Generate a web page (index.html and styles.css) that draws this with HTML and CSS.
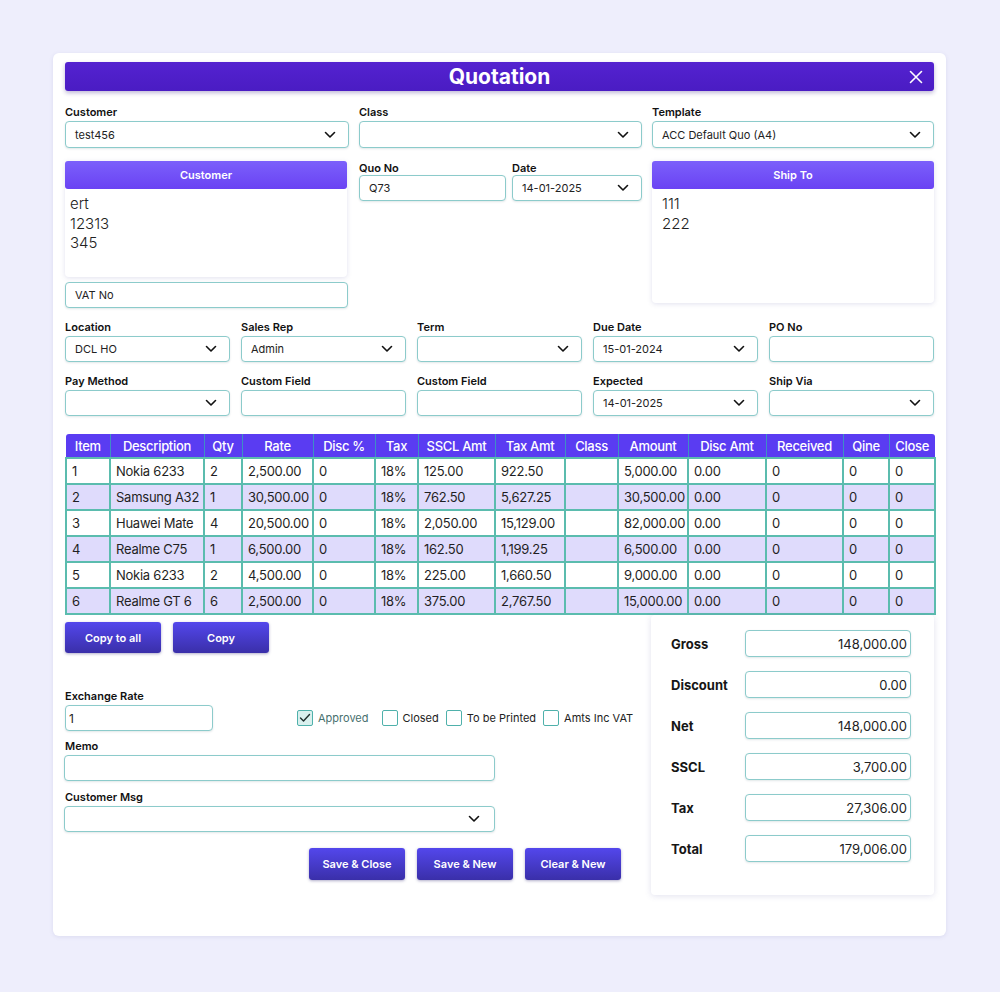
FILE: index.html
```html
<!DOCTYPE html>
<html lang="en">
<head>
<meta charset="utf-8">
<title>Quotation</title>
<link rel="stylesheet" href="styles.css">
</head>
<body>
<div class="card">
  <div class="titlebar">
    <span></span>
    <h1 class="title">Quotation</h1>
    <svg class="close" width="14" height="14" viewBox="0 0 14 14"><path d="M1.5 1.5 L12.5 12.5 M12.5 1.5 L1.5 12.5" stroke="#fff" stroke-width="1.6" fill="none" stroke-linecap="round"/></svg>
  </div>

  <div class="grid3 sec1">
    <div class="field">
      <div class="label">Customer</div>
      <div class="input select"><span>test456</span><svg class="chev" width="12" height="8" viewBox="0 0 12 8"><path d="M1.5 1.5 L6 6 L10.5 1.5" stroke="#111" stroke-width="1.6" fill="none" stroke-linecap="round" stroke-linejoin="round"/></svg></div>
    </div>
    <div class="field">
      <div class="label">Class</div>
      <div class="input select"><span></span><svg class="chev" width="12" height="8" viewBox="0 0 12 8"><path d="M1.5 1.5 L6 6 L10.5 1.5" stroke="#111" stroke-width="1.6" fill="none" stroke-linecap="round" stroke-linejoin="round"/></svg></div>
    </div>
    <div class="field">
      <div class="label">Template</div>
      <div class="input select"><span>ACC Default Quo (A4)</span><svg class="chev" width="12" height="8" viewBox="0 0 12 8"><path d="M1.5 1.5 L6 6 L10.5 1.5" stroke="#111" stroke-width="1.6" fill="none" stroke-linecap="round" stroke-linejoin="round"/></svg></div>
    </div>
  </div>

  <div class="grid3 sec2">
    <div class="col">
      <div class="addr addr-cust">
        <div class="addr-head">Customer</div>
        <div class="addr-body">ert<br>12313<br>345</div>
      </div>
      <div class="input vat"><span>VAT No</span></div>
    </div>
    <div class="quo">
      <div class="field quo-no">
        <div class="label tight">Quo No</div>
        <div class="input"><span>Q73</span></div>
      </div>
      <div class="field quo-date">
        <div class="label tight">Date</div>
        <div class="input select"><span>14-01-2025</span><svg class="chev" width="12" height="8" viewBox="0 0 12 8"><path d="M1.5 1.5 L6 6 L10.5 1.5" stroke="#111" stroke-width="1.6" fill="none" stroke-linecap="round" stroke-linejoin="round"/></svg></div>
      </div>
    </div>
    <div class="col">
      <div class="addr addr-ship">
        <div class="addr-head">Ship To</div>
        <div class="addr-body">111<br>222</div>
      </div>
    </div>
  </div>

  <div class="grid5 sec3">
    <div class="field"><div class="label">Location</div><div class="input select"><span>DCL HO</span><svg class="chev" width="12" height="8" viewBox="0 0 12 8"><path d="M1.5 1.5 L6 6 L10.5 1.5" stroke="#111" stroke-width="1.6" fill="none" stroke-linecap="round" stroke-linejoin="round"/></svg></div></div>
    <div class="field"><div class="label">Sales Rep</div><div class="input select"><span>Admin</span><svg class="chev" width="12" height="8" viewBox="0 0 12 8"><path d="M1.5 1.5 L6 6 L10.5 1.5" stroke="#111" stroke-width="1.6" fill="none" stroke-linecap="round" stroke-linejoin="round"/></svg></div></div>
    <div class="field"><div class="label">Term</div><div class="input select"><span></span><svg class="chev" width="12" height="8" viewBox="0 0 12 8"><path d="M1.5 1.5 L6 6 L10.5 1.5" stroke="#111" stroke-width="1.6" fill="none" stroke-linecap="round" stroke-linejoin="round"/></svg></div></div>
    <div class="field"><div class="label">Due Date</div><div class="input select"><span>15-01-2024</span><svg class="chev" width="12" height="8" viewBox="0 0 12 8"><path d="M1.5 1.5 L6 6 L10.5 1.5" stroke="#111" stroke-width="1.6" fill="none" stroke-linecap="round" stroke-linejoin="round"/></svg></div></div>
    <div class="field"><div class="label">PO No</div><div class="input"><span></span></div></div>
  </div>

  <div class="grid5 sec4">
    <div class="field"><div class="label">Pay Method</div><div class="input select"><span></span><svg class="chev" width="12" height="8" viewBox="0 0 12 8"><path d="M1.5 1.5 L6 6 L10.5 1.5" stroke="#111" stroke-width="1.6" fill="none" stroke-linecap="round" stroke-linejoin="round"/></svg></div></div>
    <div class="field"><div class="label">Custom Field</div><div class="input"><span></span></div></div>
    <div class="field"><div class="label">Custom Field</div><div class="input"><span></span></div></div>
    <div class="field"><div class="label">Expected</div><div class="input select"><span>14-01-2025</span><svg class="chev" width="12" height="8" viewBox="0 0 12 8"><path d="M1.5 1.5 L6 6 L10.5 1.5" stroke="#111" stroke-width="1.6" fill="none" stroke-linecap="round" stroke-linejoin="round"/></svg></div></div>
    <div class="field"><div class="label">Ship Via</div><div class="input select"><span></span><svg class="chev" width="12" height="8" viewBox="0 0 12 8"><path d="M1.5 1.5 L6 6 L10.5 1.5" stroke="#111" stroke-width="1.6" fill="none" stroke-linecap="round" stroke-linejoin="round"/></svg></div></div>
  </div>

  <table class="items">
    <colgroup>
      <col class="w-item"><col class="w-desc"><col class="w-qty"><col class="w-rate"><col class="w-disc"><col class="w-tax"><col class="w-sscl"><col class="w-taxamt"><col class="w-class"><col class="w-amt"><col class="w-discamt"><col class="w-rec"><col class="w-qine"><col class="w-close">
    </colgroup>
    <thead>
      <tr><th>Item</th><th>Description</th><th>Qty</th><th>Rate</th><th>Disc %</th><th>Tax</th><th>SSCL Amt</th><th>Tax Amt</th><th>Class</th><th>Amount</th><th>Disc Amt</th><th>Received</th><th>Qine</th><th>Close</th></tr>
    </thead>
    <tbody>
      <tr><td>1</td><td>Nokia 6233</td><td>2</td><td>2,500.00</td><td>0</td><td>18%</td><td>125.00</td><td>922.50</td><td></td><td>5,000.00</td><td>0.00</td><td>0</td><td>0</td><td>0</td></tr>
      <tr><td>2</td><td>Samsung A32</td><td>1</td><td>30,500.00</td><td>0</td><td>18%</td><td>762.50</td><td>5,627.25</td><td></td><td>30,500.00</td><td>0.00</td><td>0</td><td>0</td><td>0</td></tr>
      <tr><td>3</td><td>Huawei Mate</td><td>4</td><td>20,500.00</td><td>0</td><td>18%</td><td>2,050.00</td><td>15,129.00</td><td></td><td>82,000.00</td><td>0.00</td><td>0</td><td>0</td><td>0</td></tr>
      <tr><td>4</td><td>Realme C75</td><td>1</td><td>6,500.00</td><td>0</td><td>18%</td><td>162.50</td><td>1,199.25</td><td></td><td>6,500.00</td><td>0.00</td><td>0</td><td>0</td><td>0</td></tr>
      <tr><td>5</td><td>Nokia 6233</td><td>2</td><td>4,500.00</td><td>0</td><td>18%</td><td>225.00</td><td>1,660.50</td><td></td><td>9,000.00</td><td>0.00</td><td>0</td><td>0</td><td>0</td></tr>
      <tr><td>6</td><td>Realme GT 6</td><td>6</td><td>2,500.00</td><td>0</td><td>18%</td><td>375.00</td><td>2,767.50</td><td></td><td>15,000.00</td><td>0.00</td><td>0</td><td>0</td><td>0</td></tr>
    </tbody>
  </table>

  <div class="lower">
    <div class="lower-left">
      <div class="btnrow">
        <button class="btn">Copy to all</button>
        <button class="btn">Copy</button>
      </div>
      <div class="label ex-label">Exchange Rate</div>
      <div class="ex-row">
        <div class="input ex-input"><span class="big">1</span></div>
        <div class="checks">
          <label class="check first"><span class="box on"><svg width="12" height="10" viewBox="0 0 12 10"><path d="M1.5 5 L4.5 8 L10.5 1.5" stroke="#1f2f2e" stroke-width="1.4" fill="none" stroke-linecap="round" stroke-linejoin="round"/></svg></span><span class="ctext approved">Approved</span></label>
          <label class="check"><span class="box"></span><span class="ctext">Closed</span></label>
          <label class="check"><span class="box"></span><span class="ctext">To be Printed</span></label>
          <label class="check"><span class="box"></span><span class="ctext">Amts Inc VAT</span></label>
        </div>
      </div>
      <div class="label memo-label">Memo</div>
      <div class="input wide"><span></span></div>
      <div class="label msg-label">Customer Msg</div>
      <div class="input select wide"><span></span><svg class="chev" width="12" height="8" viewBox="0 0 12 8"><path d="M1.5 1.5 L6 6 L10.5 1.5" stroke="#111" stroke-width="1.6" fill="none" stroke-linecap="round" stroke-linejoin="round"/></svg></div>
      <div class="btnrow actions">
        <button class="btn">Save &amp; Close</button>
        <button class="btn">Save &amp; New</button>
        <button class="btn">Clear &amp; New</button>
      </div>
    </div>
    <div class="totals">
      <div class="trow"><span class="tlabel">Gross</span><div class="input tval"><span>148,000.00</span></div></div>
      <div class="trow"><span class="tlabel">Discount</span><div class="input tval"><span>0.00</span></div></div>
      <div class="trow"><span class="tlabel">Net</span><div class="input tval"><span>148,000.00</span></div></div>
      <div class="trow"><span class="tlabel">SSCL</span><div class="input tval"><span>3,700.00</span></div></div>
      <div class="trow"><span class="tlabel">Tax</span><div class="input tval"><span>27,306.00</span></div></div>
      <div class="trow"><span class="tlabel">Total</span><div class="input tval"><span>179,006.00</span></div></div>
    </div>
  </div>
</div>
</body>
</html>
```

FILE: styles.css
```css
* { box-sizing: border-box; }
html, body { margin: 0; }
body {
  background: #eeeefc;
  padding: 53px 54px 56px 53px;
  font-family: Inter, "Open Sans", "Liberation Sans", sans-serif;
  color: #1c1c22;
}
.card {
  background: #fff;
  border-radius: 6px;
  padding: 9px 12px 41px 12px;
  box-shadow: 0 1px 4px rgba(90, 90, 160, 0.12);
}
.titlebar {
  height: 29px;
  border-radius: 3px;
  background: linear-gradient(#5422d0, #4a1cc3);
  box-shadow: 0 2px 4px rgba(40, 20, 120, 0.3);
  display: grid;
  grid-template-columns: 1fr auto 1fr;
  align-items: center;
  padding: 0 11px 0 11px;
}
.title {
  margin: 0;
  color: #fff;
  font-size: 21px;
  font-weight: 700;
  line-height: 29px;
}
.close { justify-self: end; }

.label {
  font-size: 11px;
  font-weight: 600;
  line-height: 14px;
  margin-bottom: 2px;
  color: #111;
}
.label.tight { margin-bottom: 0; }

.input {
  height: 26px;
  border: 1.5px solid #8ccbcb;
  border-radius: 4px;
  background: #fff;
  box-shadow: 0 1px 2px rgba(60, 100, 110, 0.15);
  display: flex;
  align-items: center;
  justify-content: space-between;
  padding: 0 12px 0 9px;
  font-size: 11px;
  color: #222;
}
.chev { flex: none; }

.grid3 {
  display: grid;
  grid-template-columns: 284px 283px 1fr;
  column-gap: 10px;
}
.sec1 { margin-top: 14px; }
.sec1 .input { height: 27px; }
.sec2 { margin-top: 13px; align-items: start; }
.col { display: flex; flex-direction: column; }

.addr {
  background: #fff;
  border-radius: 4px;
  box-shadow: 0 1px 5px rgba(90, 90, 160, 0.18);
}
.addr-cust { width: 282px; height: 116px; }
.addr-ship { height: 142px; }
.addr-head {
  height: 28px;
  border-radius: 3px;
  background: linear-gradient(#7b60fb, #6a42f3);
  color: #fff;
  font-size: 11px;
  font-weight: 600;
  display: flex;
  align-items: center;
  justify-content: center;
}
.addr-body {
  padding: 5px 5px 0 5px;
  font-size: 15px;
  line-height: 19.5px;
  font-weight: 300;
  color: #222;
}
.addr-ship .addr-body { padding-left: 10px; }
.vat { margin-top: 5px; width: 283px; }

.quo { display: flex; gap: 6px; }
.quo-no { width: 147px; }
.quo-date { width: 130px; }

.grid5 {
  display: grid;
  grid-template-columns: repeat(5, 1fr);
  column-gap: 11px;
}
.sec3 { margin-top: 12px; }
.sec4 { margin-top: 12px; }

.items {
  margin-top: 18px;
  width: 869px;
  table-layout: fixed;
  border-collapse: collapse;
  font-size: 13px;
}
.w-item { width: 44px; }
.w-desc { width: 94px; }
.w-qty { width: 38px; }
.w-rate { width: 71px; }
.w-disc { width: 62px; }
.w-tax { width: 43px; }
.w-sscl { width: 77px; }
.w-taxamt { width: 70px; }
.w-class { width: 53px; }
.w-amt { width: 70px; }
.w-discamt { width: 78px; }
.w-rec { width: 77px; }
.w-qine { width: 46px; }
.w-close { width: 46px; }
.items th {
  background: #5a3cf2;
  color: #fff;
  font-weight: 500;
  height: 24px;
  padding: 0;
  text-align: center;
  border-left: 1.5px solid #3e8fc4;
  white-space: nowrap;
  letter-spacing: -0.3px;
}
.items th:first-child { border-left: none; border-top-left-radius: 3px; }
.items th:last-child { border-top-right-radius: 3px; }
.items td {
  height: 26px;
  border: 2px solid #5bbcae;
  padding: 0 0 0 5px;
  white-space: nowrap;
  overflow: hidden;
  color: #1f1f24;
  letter-spacing: -0.25px;
}
.items tbody tr:nth-child(even) td { background: #dfdbfc; }
.items tbody tr:nth-child(odd) td { background: #fff; }

.lower {
  display: grid;
  grid-template-columns: 1fr 283px;
  column-gap: 11px;
  align-items: start;
}
.lower-left { padding-top: 7px; }
.btnrow { display: flex; gap: 12px; }
.btn {
  width: 96px;
  height: 31px;
  border: none;
  border-radius: 3px;
  background: linear-gradient(#5347ec, #3a2fa9);
  box-shadow: 0 1px 3px rgba(30, 20, 100, 0.35);
  color: #fff;
  font-family: inherit;
  font-size: 11px;
  font-weight: 600;
  padding: 0;
}
.ex-label { margin-top: 36px; }
.ex-row { display: flex; align-items: center; }
.ex-input { width: 148px; padding-left: 3px; }
.big { font-size: 12px; }
.checks { display: flex; margin-left: 84px; gap: 7px; white-space: nowrap; }
.check { display: flex; align-items: center; gap: 5px; font-size: 11px; }
.check.first { margin-right: 6px; }
.box {
  flex: none;
  width: 16px;
  height: 16px;
  border: 1.5px solid #4fb1ab;
  border-radius: 2px;
  background: #fff;
  display: flex;
  align-items: center;
  justify-content: center;
}
.box.on { background: #d9f0ee; }
.ctext { color: #222; }
.ctext.approved { color: #47706e; }
.memo-label { margin-top: 8px; }
.msg-label { margin-top: 9px; }
.wide { width: 431px; margin-left: -1px; padding-right: 14px; }
.actions { margin-top: 16px; justify-content: flex-end; padding-right: 19px; }
.actions .btn { height: 32px; }

.totals {
  margin-top: 0;
  background: #fff;
  border-radius: 4px;
  box-shadow: 0 1px 6px rgba(90, 90, 160, 0.18);
  padding: 15px 23px 33px 20px;
  display: flex;
  flex-direction: column;
  gap: 14px;
}
.trow { display: flex; align-items: center; }
.tlabel { width: 74px; font-size: 13px; font-weight: 700; color: #161616; }
.tval {
  width: 166px;
  height: 27px;
  justify-content: flex-end;
  padding-right: 3px;
  font-size: 13px;
}
```
